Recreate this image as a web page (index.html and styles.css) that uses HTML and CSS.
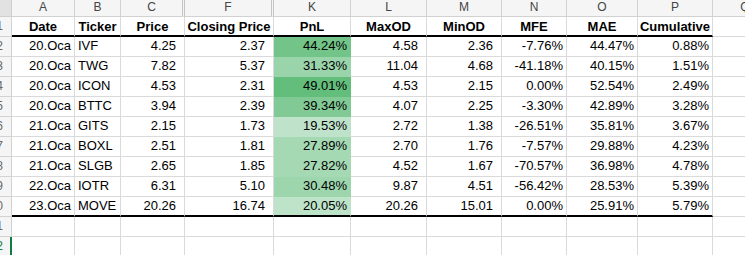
FILE: index.html
```html
<!DOCTYPE html>
<html>
<head>
<meta charset="utf-8">
<link rel="stylesheet" href="styles.css">
</head>
<body>
<div class="sheet">
  <div class="c corner"></div>
  <div class="c ch">A</div><div class="c ch">B</div><div class="c ch dbl">C</div><div class="c ch dbl">F</div><div class="c ch">K</div><div class="c ch">L</div><div class="c ch">M</div><div class="c ch">N</div><div class="c ch">O</div><div class="c ch">P</div><div class="c ch q">Q</div>

  <div class="c rh"><span>1</span></div>
  <div class="c hd">Date</div><div class="c hd">Ticker</div><div class="c hd">Price</div><div class="c hd">Closing Price</div><div class="c hd">PnL</div><div class="c hd">MaxOD</div><div class="c hd">MinOD</div><div class="c hd">MFE</div><div class="c hd">MAE</div><div class="c hd">Cumulative</div><div class="c q"></div>

  <div class="c rh"><span>2</span></div>
  <div class="c r">20.Oca</div><div class="c l">IVF</div><div class="c n">4.25</div><div class="c n">2.37</div><div class="c r pnl" style="background:#72C488">44.24%</div><div class="c n">4.58</div><div class="c n">2.36</div><div class="c r">-7.76%</div><div class="c r">44.47%</div><div class="c r">0.88%</div><div class="c q"></div>

  <div class="c rh"><span>3</span></div>
  <div class="c r">20.Oca</div><div class="c l">TWG</div><div class="c n">7.82</div><div class="c n">5.37</div><div class="c r pnl" style="background:#9AD4AB">31.33%</div><div class="c n">11.04</div><div class="c n">4.68</div><div class="c r">-41.18%</div><div class="c r">40.15%</div><div class="c r">1.51%</div><div class="c q"></div>

  <div class="c rh"><span>4</span></div>
  <div class="c r">20.Oca</div><div class="c l">ICON</div><div class="c n">4.53</div><div class="c n">2.31</div><div class="c r pnl" style="background:#63BE7B">49.01%</div><div class="c n">4.53</div><div class="c n">2.15</div><div class="c r">0.00%</div><div class="c r">52.54%</div><div class="c r">2.49%</div><div class="c q"></div>

  <div class="c rh"><span>5</span></div>
  <div class="c r">20.Oca</div><div class="c l">BTTC</div><div class="c n">3.94</div><div class="c n">2.39</div><div class="c r pnl" style="background:#81CA95">39.34%</div><div class="c n">4.07</div><div class="c n">2.25</div><div class="c r">-3.30%</div><div class="c r">42.89%</div><div class="c r">3.28%</div><div class="c q"></div>

  <div class="c rh"><span>6</span></div>
  <div class="c r">21.Oca</div><div class="c l">GITS</div><div class="c n">2.15</div><div class="c n">1.73</div><div class="c r pnl" style="background:#BFE3CA">19.53%</div><div class="c n">2.72</div><div class="c n">1.38</div><div class="c r">-26.51%</div><div class="c r">35.81%</div><div class="c r">3.67%</div><div class="c q"></div>

  <div class="c rh"><span>7</span></div>
  <div class="c r">21.Oca</div><div class="c l">BOXL</div><div class="c n">2.51</div><div class="c n">1.81</div><div class="c r pnl" style="background:#A5D9B4">27.89%</div><div class="c n">2.70</div><div class="c n">1.76</div><div class="c r">-7.57%</div><div class="c r">29.88%</div><div class="c r">4.23%</div><div class="c q"></div>

  <div class="c rh"><span>8</span></div>
  <div class="c r">21.Oca</div><div class="c l">SLGB</div><div class="c n">2.65</div><div class="c n">1.85</div><div class="c r pnl" style="background:#A5D9B4">27.82%</div><div class="c n">4.52</div><div class="c n">1.67</div><div class="c r">-70.57%</div><div class="c r">36.98%</div><div class="c r">4.78%</div><div class="c q"></div>

  <div class="c rh"><span>9</span></div>
  <div class="c r">22.Oca</div><div class="c l">IOTR</div><div class="c n">6.31</div><div class="c n">5.10</div><div class="c r pnl" style="background:#9DD5AD">30.48%</div><div class="c n">9.87</div><div class="c n">4.51</div><div class="c r">-56.42%</div><div class="c r">28.53%</div><div class="c r">5.39%</div><div class="c q"></div>

  <div class="c rh"><span>10</span></div>
  <div class="c r last">23.Oca</div><div class="c l last">MOVE</div><div class="c n last">20.26</div><div class="c n last">16.74</div><div class="c r pnl last" style="background:#BDE3C9">20.05%</div><div class="c n last">20.26</div><div class="c n last">15.01</div><div class="c r last">0.00%</div><div class="c r last">25.91%</div><div class="c r last">5.79%</div><div class="c q"></div>

  <div class="c rh"><span>11</span></div>
  <div class="c"></div><div class="c"></div><div class="c"></div><div class="c"></div><div class="c"></div><div class="c"></div><div class="c"></div><div class="c"></div><div class="c"></div><div class="c"></div><div class="c q"></div>

  <div class="c rh sel"><span>12</span></div>
  <div class="c"></div><div class="c"></div><div class="c"></div><div class="c"></div><div class="c"></div><div class="c"></div><div class="c"></div><div class="c"></div><div class="c"></div><div class="c"></div><div class="c q"></div>
</div>
</body>
</html>
```

FILE: styles.css
```css
html, body {
  margin: 0;
  padding: 0;
  background: #ffffff;
}

body {
  font-family: "Liberation Sans", Arial, sans-serif;
}

.sheet {
  display: grid;
  grid-template-columns: 12px 63px 46px 64px 89px 77px 76px 75px 65px 71px 75px 64px;
  grid-template-rows: 17px repeat(12, 20px);
  width: 745px;
  height: 255px;
  overflow: hidden;
}

.c {
  box-sizing: border-box;
  border-right: 1px solid #dadada;
  border-bottom: 1px solid #dadada;
  font-size: 13px;
  line-height: 18px;
  color: #000;
  white-space: nowrap;
  overflow: hidden;
}

.corner {
  background: #e2e2e2;
  border-color: #cfcfcf;
}

.ch {
  background: #f5f5f5;
  border-color: #d2d2d2;
  color: #444;
  font-size: 12px;
  line-height: 15px;
  text-align: center;
}

.ch.dbl {
  border-right: 3px double #c4c4c4;
}

.rh {
  background: #f5f5f5;
  border-color: #d2d2d2;
  color: #666;
  font-size: 12px;
  display: flex;
  justify-content: flex-end;
  padding-right: 8px;
}

.rh.sel {
  color: #107c41;
  border-right: 2px solid #107c41;
  padding-right: 7px;
}

.hd {
  font-weight: bold;
  text-align: center;
  border-bottom: 2px solid #000;
  padding-top: 1px;
  line-height: 17px;
}

.last {
  border-bottom: 2px solid #000;
}

.r {
  text-align: right;
  padding-right: 3px;
}

.n {
  text-align: right;
  padding-right: 8px;
}

.l {
  padding-left: 3px;
}

.pnl {
  border-right-color: transparent;
  border-bottom-color: transparent;
}

.pnl.last {
  border-bottom-color: #000;
}

.q {
  border-right: none;
}
```
